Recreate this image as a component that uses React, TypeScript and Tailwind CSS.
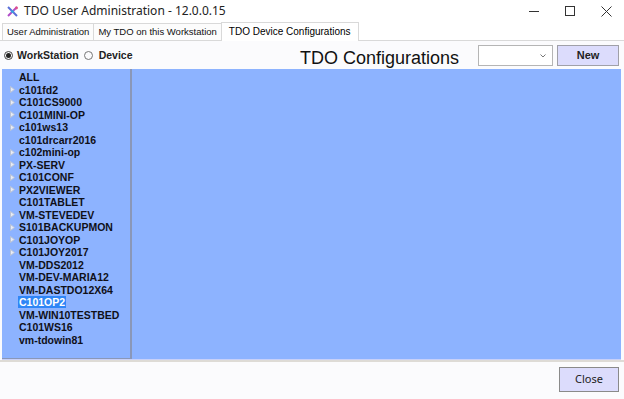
import { useState } from 'react'

const devices: { name: string; expandable: boolean }[] = [
  { name: 'ALL', expandable: false },
  { name: 'c101fd2', expandable: true },
  { name: 'C101CS9000', expandable: true },
  { name: 'C101MINI-OP', expandable: true },
  { name: 'c101ws13', expandable: true },
  { name: 'c101drcarr2016', expandable: false },
  { name: 'c102mini-op', expandable: true },
  { name: 'PX-SERV', expandable: true },
  { name: 'C101CONF', expandable: true },
  { name: 'PX2VIEWER', expandable: true },
  { name: 'C101TABLET', expandable: false },
  { name: 'VM-STEVEDEV', expandable: true },
  { name: 'S101BACKUPMON', expandable: true },
  { name: 'C101JOYOP', expandable: true },
  { name: 'C101JOY2017', expandable: true },
  { name: 'VM-DDS2012', expandable: false },
  { name: 'VM-DEV-MARIA12', expandable: false },
  { name: 'VM-DASTDO12X64', expandable: false },
  { name: 'C101OP2', expandable: false },
  { name: 'VM-WIN10TESTBED', expandable: false },
  { name: 'C101WS16', expandable: false },
  { name: 'vm-tdowin81', expandable: false },
]

const tabs = ['User Administration', 'My TDO on this Workstation', 'TDO Device Configurations']

function AppIcon() {
  return (
    <svg width="13" height="13" viewBox="0 0 13 13">
      <path d="M2 2 L11 11" stroke="#5a6fd8" strokeWidth="2" />
      <path d="M11 2 L2 11" stroke="#b04cc8" strokeWidth="2" />
      <circle cx="6.5" cy="6.5" r="1.6" fill="#3aa0e0" />
      <circle cx="10.5" cy="3" r="1.4" fill="#e0508a" />
    </svg>
  )
}

function Expander() {
  return (
    <svg width="5" height="7" viewBox="0 0 5 7" className="shrink-0">
      <path d="M0.5 0.5 L4.5 3.5 L0.5 6.5 Z" fill="#e8ecf6" stroke="#b9c2d6" strokeWidth="1" />
    </svg>
  )
}

export default function App() {
  const [tab, setTab] = useState(2)
  const [mode, setMode] = useState<'ws' | 'dev'>('ws')
  const [selected, setSelected] = useState('C101OP2')

  return (
    <div className="w-[624px] h-[399px] overflow-hidden bg-[#fbfbfd] flex flex-col font-['Liberation_Sans',Arial,sans-serif] text-[#111]">
      {/* Title bar */}
      <div className="h-[22px] bg-white flex items-center shrink-0">
        <div className="ml-[6px] mr-[5px] flex items-center">
          <AppIcon />
        </div>
        <span className="text-[12px] font-['Noto_Sans',sans-serif] text-[#222]">TDO User Administration - 12.0.0.15</span>
        <div className="ml-auto flex items-center h-full">
          <div className="w-[36px] h-full flex items-center justify-center">
            <div className="w-[10px] h-px bg-[#333]" />
          </div>
          <div className="w-[36px] h-full flex items-center justify-center">
            <div className="w-[10px] h-[10px] border border-[#333]" />
          </div>
          <div className="w-[36px] h-full flex items-center justify-center">
            <svg width="11" height="11" viewBox="0 0 11 11">
              <path d="M0.5 0.5 L10.5 10.5 M10.5 0.5 L0.5 10.5" stroke="#333" strokeWidth="1" />
            </svg>
          </div>
        </div>
      </div>

      {/* Tabs */}
      <div className="h-[19px] flex items-end pl-[2px] shrink-0 border-b border-[#d9d9d9] bg-white">
        {tabs.map((t, i) => (
          <button
            key={t}
            type="button"
            onClick={() => setTab(i)}
            className={
              i === tab
                ? 'h-[19px] -mb-px px-[7px] bg-white border border-b-0 border-[#d9d9d9] text-[10px] font-medium text-black leading-none whitespace-nowrap'
                : 'h-[17px] px-[4px] bg-[#fcfcfc] border border-b-0 border-[#d9d9d9] -mr-px text-[9.5px] text-[#111] leading-none whitespace-nowrap'
            }
          >
            {t}
          </button>
        ))}
      </div>

      {/* Header row */}
      <div className="h-[28px] flex items-start shrink-0 overflow-hidden">
        <div className="w-[300px] shrink-0 flex items-center mt-[9px] pl-[4px] text-[10.5px] font-bold text-[#222]">
          <button type="button" onClick={() => setMode('ws')} className="flex items-center gap-[4px]">
            <span className="w-[9px] h-[9px] rounded-full border border-[#444] flex items-center justify-center">
              {mode === 'ws' && <span className="w-[5px] h-[5px] rounded-full bg-[#222]" />}
            </span>
            <span className="leading-none">WorkStation</span>
          </button>
          <button type="button" onClick={() => setMode('dev')} className="flex items-center gap-[6px] ml-[5px]">
            <span className="w-[9px] h-[9px] rounded-full border border-[#777] flex items-center justify-center">
              {mode === 'dev' && <span className="w-[5px] h-[5px] rounded-full bg-[#222]" />}
            </span>
            <span className="leading-none">Device</span>
          </button>
        </div>
        <div className="mt-[8px] text-[18px] leading-none text-[#111] whitespace-nowrap">
          TDO Configurations
        </div>
        <div className="ml-auto mr-[5px] mt-[4px] flex gap-[4px]">
          <div className="w-[75px] h-[21px] bg-white border border-[#b5b5b5] flex items-center justify-end pr-[6px]">
            <svg width="6" height="4" viewBox="0 0 6 4">
              <path d="M0.5 0.5 L3 3 L5.5 0.5" fill="none" stroke="#777" strokeWidth="1" />
            </svg>
          </div>
          <button
            type="button"
            className="w-[62px] h-[21px] bg-[#dcdcfc] border border-[#a0a0a8] text-[11px] font-semibold text-[#222]"
          >
            New
          </button>
        </div>
      </div>

      {/* Blue workspace */}
      <div className="h-[291px] mx-[2px] mr-[3px] bg-[#8db3ff] flex shrink-0 border-b border-[#c8d0f8]">
        <div className="w-[130px] h-[290px] border-r-2 border-b border-[#8a97b8] pt-[2px] text-[10.5px] font-bold text-[#101018]">
          {devices.map((d) => (
            <div
              key={d.name}
              onClick={() => setSelected(d.name)}
              className="h-[12.5px] flex items-center pl-[8px]"
            >
              <span className="w-[9px] flex items-center">{d.expandable && <Expander />}</span>
              <span
                className={
                  selected === d.name
                    ? 'bg-[#2f86f6] text-white px-[1px] -ml-px leading-[12px]'
                    : 'leading-[12px]'
                }
              >
                {d.name}
              </span>
            </div>
          ))}
        </div>
      </div>
      <div className="h-[2px] bg-[#dedbd6] shrink-0" />

      {/* Footer */}
      <div className="flex-1 flex items-start justify-end pr-[5px] pt-[5px]">
        <button
          type="button"
          className="w-[60px] h-[25px] bg-[#dcdcfc] border border-[#8a8a8a] text-[11px] text-[#222] font-['Noto_Sans',sans-serif]"
        >
          Close
        </button>
      </div>
    </div>
  )
}
